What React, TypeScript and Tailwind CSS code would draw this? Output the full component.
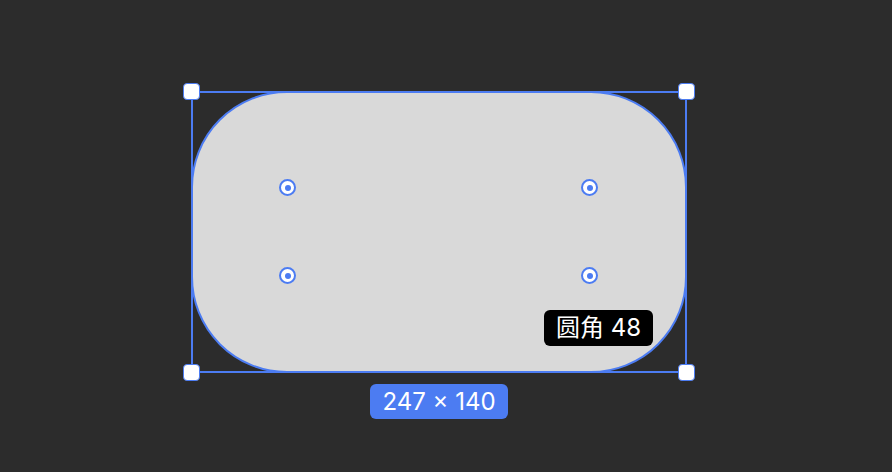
function CornerHandle({ pos }: { pos: string }) {
  return (
    <div
      className={`absolute ${pos} w-[17px] h-[17px] rounded-[4px] bg-white border-[1.5px] border-[#4c7cf2]`}
    />
  );
}

function RadiusHandle({ pos }: { pos: string }) {
  return (
    <div
      className={`absolute ${pos} w-[17px] h-[17px] rounded-full bg-white border-2 border-[#4c7cf2] flex items-center justify-center`}
    >
      <div className="w-[6px] h-[6px] rounded-full bg-[#4c7cf2]" />
    </div>
  );
}

export default function App() {
  return (
    <div
      className="w-full h-[472px] bg-[#2c2c2c] pl-[191px] pt-[91px] flex flex-col"
      style={{ fontFamily: '"Inter", "Noto Sans CJK SC", sans-serif' }}
    >
      <div className="relative w-[496px] h-[282px]">
        <div className="w-full h-full rounded-[96px] bg-[#d9d9d9] border-2 border-[#4c7cf2]" />
        {/* selection frame */}
        <div className="absolute inset-0 border-2 border-[#4c7cf2]" />

        <RadiusHandle pos="left-[88px] top-[88px]" />
        <RadiusHandle pos="left-[390px] top-[88px]" />
        <RadiusHandle pos="left-[88px] top-[176px]" />
        <RadiusHandle pos="left-[390px] top-[176px]" />

        <CornerHandle pos="-left-[8px] -top-[8px]" />
        <CornerHandle pos="-right-[8px] -top-[8px]" />
        <CornerHandle pos="-left-[8px] -bottom-[8px]" />
        <CornerHandle pos="-right-[8px] -bottom-[8px]" />

        <div className="absolute left-[353px] top-[219px] w-[109px] h-[36px] rounded-[6px] bg-black text-white text-[24px] leading-none flex items-center justify-center">
          圆角 48
        </div>
      </div>

      <div className="w-[496px] mt-[11px] flex justify-center">
        <div className="w-[138px] h-[35px] rounded-[6px] bg-[#4c7cf2] text-white text-[24px] leading-none flex items-center justify-center">
          247 × 140
        </div>
      </div>
    </div>
  );
}
